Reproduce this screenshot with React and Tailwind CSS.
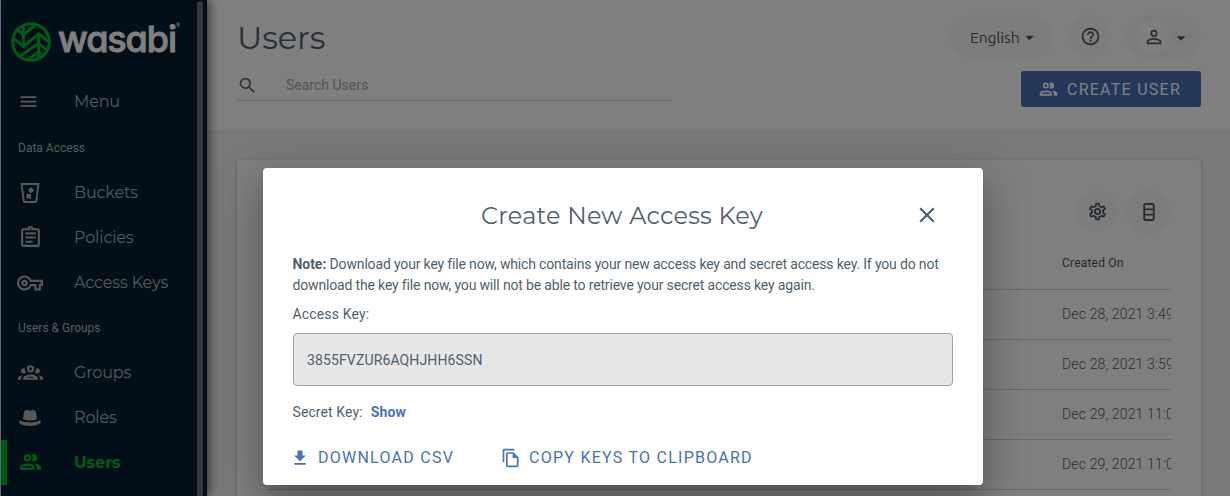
import {
  MdArrowDropDown,
  MdClose,
  MdFileDownload,
  MdHelpOutline,
  MdMenu,
  MdOutlineAssignment,
  MdOutlineFileCopy,
  MdOutlineVpnKey,
  MdPersonOutline,
  MdSearch,
} from "react-icons/md";

const display = "font-['Montserrat','Inter',sans-serif]";

function LogoMark() {
  return (
    <svg className="size-10 shrink-0" viewBox="0 0 120 120" fill="none" stroke="#00b62d" strokeWidth="9">
      <circle cx="60" cy="60" r="55" />
      <path d="M37 14v58M83 38v70" />
      <path d="M14 21l23 17 35-28M5 47l32 26 46-37 31 24M25 104l58-40 26 21M47 115l36-25 17 13" />
    </svg>
  );
}

function BucketIcon() {
  return (
    <svg className="size-6" viewBox="0 0 24 24" fill="currentColor">
      <path fillRule="evenodd" d="M2.5 2h19l-2.3 18.3a2 2 0 0 1-2 1.7H6.8a2 2 0 0 1-2-1.700zM4.700 4l2 16h10.600l2-16z" />
      <path d="M13 6l3.2 3.2L13 12.4 9.8 9.2zM8.500 13H13v4.500H8.500z" />
    </svg>
  );
}

function PeopleIcon({ className }) {
  return (
    <svg className={`shrink-0 ${className}`} viewBox="0 0 24 24" fill="currentColor">
      <path d="M13.07 10.41A5 5 0 0 0 13.07 4.59A3.39 3.39 0 0 1 15 4A3.5 3.5 0 0 1 15 11A3.39 3.39 0 0 1 13.07 10.41M5.5 7.5A3.5 3.5 0 1 1 9 11A3.5 3.5 0 0 1 5.5 7.5M7.5 7.5A1.5 1.5 0 1 0 9 6A1.5 1.5 0 0 0 7.5 7.5M16 17V19H2V17S2 13 9 13 16 17 16 17M14 17C13.86 16.22 12.67 15 9 15S4.07 16.31 4 17M15.95 13A5.32 5.32 0 0 1 18 17V19H22V17S22 13.37 15.94 13Z" />
    </svg>
  );
}

function GroupIcon() {
  return (
    <svg className="size-[25px] shrink-0" viewBox="0 0 24 24" fill="currentColor">
      <path d="M12,5A3.5,3.5 0 0,0 8.5,8.5A3.5,3.5 0 0,0 12,12A3.5,3.5 0 0,0 15.5,8.5A3.5,3.5 0 0,0 12,5M12,7A1.5,1.5 0 0,1 13.5,8.5A1.5,1.5 0 0,1 12,10A1.5,1.5 0 0,1 10.5,8.5A1.5,1.5 0 0,1 12,7M5.5,8A2.5,2.5 0 0,0 3,10.5C3,11.44 3.53,12.25 4.29,12.68C4.65,12.88 5.06,13 5.5,13C5.94,13 6.35,12.88 6.71,12.68C7.08,12.47 7.39,12.17 7.62,11.81C6.89,10.86 6.5,9.7 6.5,8.5C6.5,8.41 6.5,8.31 6.5,8.22C6.2,8.08 5.86,8 5.5,8M18.5,8C18.14,8 17.8,8.08 17.5,8.22C17.5,8.31 17.5,8.41 17.5,8.5C17.5,9.7 17.11,10.86 16.38,11.81C16.5,12 16.63,12.15 16.78,12.3C16.94,12.45 17.1,12.58 17.29,12.68C17.65,12.88 18.06,13 18.5,13C18.94,13 19.35,12.88 19.71,12.68C20.47,12.25 21,11.44 21,10.5A2.5,2.5 0 0,0 18.5,8M12,14C9.66,14 5,15.17 5,17.5V19H19V17.5C19,15.17 14.34,14 12,14M4.71,14.55C2.78,14.78 0,15.76 0,17.5V19H3V17.07C3,16.06 3.69,15.22 4.71,14.55M19.29,14.55C20.31,15.22 21,16.06 21,17.07V19H24V17.5C24,15.76 21.22,14.78 19.29,14.55M12,16C13.53,16 15.24,16.5 16.23,17H7.77C8.76,16.5 10.47,16 12,16Z" />
    </svg>
  );
}

function HatIcon() {
  return (
    <svg className="size-6" viewBox="0 0 24 24" fill="currentColor">
      <path d="M5 13.3l1-6.6C6.300 4.700 7.400 4 8.600 4c1.600 0 2.200.8 3.400.8S13.800 4 15.400 4c1.200 0 2.300.7 2.600 2.700l1 6.600c-4 1.600-10 1.600-14 0z" />
      <path d="M1.800 14.200c6 3 14.400 3 20.400 0 .8.700.6 2.900-.4 3.500-5.400 3-14.200 3-19.600 0-1-.6-1.200-2.800-.4-3.500z" />
    </svg>
  );
}

function CogIcon() {
  return (
    <svg className="size-[21px]" viewBox="0 0 24 24" fill="currentColor">
      <path d="M12,8A4,4 0 0,1 16,12A4,4 0 0,1 12,16A4,4 0 0,1 8,12A4,4 0 0,1 12,8M12,10A2,2 0 0,0 10,12A2,2 0 0,0 12,14A2,2 0 0,0 14,12A2,2 0 0,0 12,10M10,22C9.75,22 9.54,21.82 9.5,21.58L9.13,18.93C8.5,18.68 7.96,18.34 7.44,17.94L4.95,18.95C4.73,19.03 4.46,18.95 4.34,18.73L2.34,15.27C2.21,15.05 2.27,14.78 2.46,14.63L4.57,12.97L4.5,12L4.57,11L2.46,9.37C2.27,9.22 2.21,8.95 2.34,8.73L4.34,5.27C4.46,5.05 4.73,4.96 4.95,5.05L7.44,6.05C7.96,5.66 8.5,5.32 9.13,5.07L9.5,2.42C9.54,2.18 9.75,2 10,2H14C14.25,2 14.46,2.18 14.5,2.42L14.87,5.07C15.5,5.32 16.04,5.66 16.56,6.05L19.05,5.05C19.27,4.96 19.54,5.05 19.66,5.27L21.66,8.73C21.79,8.95 21.73,9.22 21.54,9.37L19.43,11L19.5,12L19.43,13L21.54,14.63C21.73,14.78 21.79,15.05 21.66,15.27L19.66,18.73C19.54,18.95 19.27,19.04 19.05,18.95L16.56,17.95C16.04,18.34 15.5,18.68 14.87,18.93L14.5,21.58C14.46,21.82 14.25,22 14,22H10M11.25,4L10.88,6.61C9.68,6.86 8.62,7.5 7.85,8.39L5.44,7.35L4.69,8.65L6.8,10.2C6.4,11.37 6.4,12.64 6.8,13.8L4.68,15.36L5.43,16.66L7.86,15.62C8.63,16.5 9.68,17.14 10.87,17.38L11.24,20H12.76L13.13,17.39C14.32,17.14 15.37,16.5 16.14,15.62L18.57,16.66L19.32,15.36L17.2,13.81C17.6,12.64 17.6,11.37 17.2,10.2L19.31,8.65L18.56,7.35L16.15,8.39C15.38,7.5 14.32,6.86 13.12,6.62L12.75,4H11.25Z" />
    </svg>
  );
}

function RowsIcon() {
  return (
    <svg className="mb-px h-[18px] w-3" viewBox="0 0 12 18" fill="none" stroke="currentColor" strokeWidth="1.8">
      <rect x="1.200" y="1" width="9.600" height="16" rx="1" />
      <path d="M1 6.300h10M1 11.700h10" />
    </svg>
  );
}

function NavItem({ icon, label, active }) {
  return (
    <a className={`flex h-[45px] items-center ${active ? "text-[#00b62d]" : "text-[#b0b0b0]"}`}>
      <span className={`h-full w-1.5 ${active ? "bg-[#00b62d]" : ""}`} />
      <span className="flex w-[67px] items-center pl-[11px]">
        <span className="flex w-6 justify-center">{icon}</span>
      </span>
      <span className={`${display} text-base ${active ? "font-bold" : "font-normal tracking-[-0.13px]"}`}>{label}</span>
    </a>
  );
}

function Sidebar() {
  return (
    <aside className="z-10 flex w-[206px] shrink-0 bg-[#041f30] shadow-[2px_0_10px_rgba(0,0,0,0.6)]">
      <div className="w-[196px]">
        <div className="flex h-[79px] items-start gap-[7px] pt-[22px] pl-2.5">
          <LogoMark />
          <div className="flex items-start pt-px text-white">
            <span className="font-['Inter',sans-serif] text-[36px] leading-8 font-medium tracking-[-1.1px] [font-feature-settings:'cv11'] [-webkit-text-stroke:0.9px_white]">
              wasabi
            </span>
            <span className="text-[5px] leading-none">®</span>
          </div>
        </div>
        <NavItem icon={<MdMenu size={21} className="mr-[3px] mb-px" />} label="Menu" />
        <div className="flex h-[46px] items-center pt-0.5 pl-[17px] font-['Roboto',sans-serif] text-xs text-[#b4b4b4]">Data Access</div>
        <NavItem icon={<BucketIcon />} label="Buckets" />
        <NavItem icon={<MdOutlineAssignment size={25} className="shrink-0" />} label="Policies" />
        <NavItem icon={<MdOutlineVpnKey size={26} className="shrink-0" />} label="Access Keys" />
        <div className="flex h-[45px] items-center pl-[17px] font-['Roboto',sans-serif] text-xs text-[#b4b4b4]">
          Users &amp; Groups
        </div>
        <NavItem icon={<GroupIcon />} label="Groups" />
        <NavItem icon={<HatIcon />} label="Roles" />
        <NavItem icon={<PeopleIcon className="size-[25px]" />} label="Users" active />
      </div>
      <div className="mt-px w-1.5 rounded-t-full bg-[#6b7075]" />
    </aside>
  );
}

function Header() {
  return (
    <header className="flex h-[130px] justify-between bg-white pr-[29px] pl-[30px]">
      <div className="w-[434px]">
        <h1 className={`${display} pt-[18px] text-[32px] leading-10 font-normal tracking-[-0.1px] text-[#4f6070]`}>Users</h1>
        <div className="mt-3 flex h-[31px] items-center border-b border-[#d0d0d0]">
          <MdSearch size={21} className="text-[#6a6a6a]" />
          <span className="pl-7 font-['Roboto',sans-serif] text-sm text-[#aaa]">Search Users</span>
        </div>
      </div>
      <div className="flex flex-col items-end pt-[15px] text-[#4f5a65]">
        <div className="flex items-start">
          <div className="flex h-11 w-[103px] items-center rounded-full bg-[#f8f8f8] pt-px pl-5 text-[#4f5a65]">
            <span className="font-['Ubuntu','Noto_Sans',sans-serif] text-[15.500px] tracking-[-0.05px]">English</span>
            <MdArrowDropDown size={21} className="-ml-px shrink-0" />
          </div>
          <div className="ml-4 flex size-[42px] items-center justify-center rounded-full bg-[#f8f8f8]">
            <MdHelpOutline size={21} />
          </div>
          <div className="ml-[15px] flex h-11 w-[75px] items-center rounded-full bg-[#f8f8f8] pt-px pl-[11px]">
            <span className="flex size-[33px] items-center justify-center rounded-full bg-white pb-0.5">
              <MdPersonOutline size={22} />
            </span>
            <MdArrowDropDown size={22} />
          </div>
        </div>
        <button className="mt-3 flex h-9 w-[180px] items-center rounded-[3px] bg-[#4871b7] pl-[17px] font-['Roboto',sans-serif] text-base tracking-[1.250px] text-white">
          <PeopleIcon className="mr-2 size-[21px]" />
          <span className="pt-0.5">CREATE USER</span>
        </button>
      </div>
    </header>
  );
}

const rows = ["Dec 28, 2021 3:49 PM", "Dec 28, 2021 3:59 PM", "Dec 29, 2021 11:01 AM", "Dec 29, 2021 11:04 AM"];

function UsersTable() {
  return (
    <section className="mt-[30px] mr-[29px] ml-[30px] h-[400px] rounded bg-white px-[30px] pt-[30px] shadow-[0_1px_3px_rgba(0,0,0,0.3)]">
      <div className="flex items-start justify-end gap-2 text-[#4f5a65]">
        <div className="flex size-[42px] items-center justify-center rounded-full bg-[#f8f8f8]">
          <CogIcon />
        </div>
        <div className="flex size-[45px] items-center justify-center rounded-full bg-[#f8f8f8]">
          <RowsIcon />
        </div>
      </div>
      <div className="flex h-[55px] items-center justify-end border-b border-[#d4d4d4] pt-0.5 font-['Roboto',sans-serif] text-xs tracking-[0.2px] text-[#46545f]">
        <span className="w-[109px]">Created On</span>
      </div>
      {rows.map((date) => (
        <div key={date} className="flex h-[50px] items-center justify-end border-b border-[#d4d4d4] pb-0.5 font-['Roboto',sans-serif] text-sm font-light text-[#4f5f6d]">
          <span className="w-[109px] overflow-hidden whitespace-nowrap tracking-[0.15px]">{date}</span>
        </div>
      ))}
    </section>
  );
}

function AccessKeyDialog() {
  return (
    <div role="dialog" className="h-[317px] w-[720px] rounded bg-white px-[29.500px] font-['Roboto',sans-serif] text-sm text-[#4f5f6d] shadow-[0_11px_15px_-7px_rgba(0,0,0,0.2),0_24px_38px_3px_rgba(0,0,0,0.14),0_9px_46px_8px_rgba(0,0,0,0.12)]">
      <div className="flex h-[86px] items-center justify-end pt-[9px] pr-3.5">
        <h2 className={`${display} flex-1 pl-[38px] text-center text-2xl tracking-[0.2px]`}>Create New Access Key</h2>
        <MdClose size={26} className="mb-0.5" />
      </div>
      <p className="leading-[21px] tracking-[-0.16px]">
        <b className="tracking-[-0.05px]">Note:</b> Download your key file now, which contains your new access key and secret access key. If
        you do not download the key file now, you will not be able to retrieve your secret access key again.
      </p>
      <div className="mt-2 leading-[21px] tracking-[0.15px]">Access Key:</div>
      <div className="mt-2 flex h-[53px] w-[660px] items-center rounded border border-[#a3a3a3] bg-[#e7e7e7] pl-[13.500px] tracking-[0.13px]">
        3855FVZUR6AQHJHH6SSN
      </div>
      <div className="mt-4 flex gap-2 leading-[21px] tracking-[0.1px]">
        Secret Key: <a className="font-bold text-[#4871b7]">Show</a>
      </div>
      <div className="mt-6 flex h-[22px] items-center text-base tracking-[1.250px] text-[#4871b7]">
        <button className="-ml-[3px] flex items-center">
          <MdFileDownload size={20} className="mr-[8.500px]" />
          DOWNLOAD CSV
        </button>
        <button className="ml-[47px] flex items-center">
          <MdOutlineFileCopy size={20} className="mr-2" />
          COPY KEYS TO CLIPBOARD
        </button>
      </div>
    </div>
  );
}

export default function App() {
  return (
    <div className="relative h-[496px] w-[1230px] overflow-hidden bg-white">
      <div className="flex h-full pl-px">
        <Sidebar />
        <main className="min-w-0 flex-1 bg-[#f2f2f2]">
          <Header />
          <UsersTable />
        </main>
      </div>
      <div className="absolute inset-0 z-20 flex items-start bg-black/50 pt-[168px] pl-[263px]">
        <AccessKeyDialog />
      </div>
    </div>
  );
}
